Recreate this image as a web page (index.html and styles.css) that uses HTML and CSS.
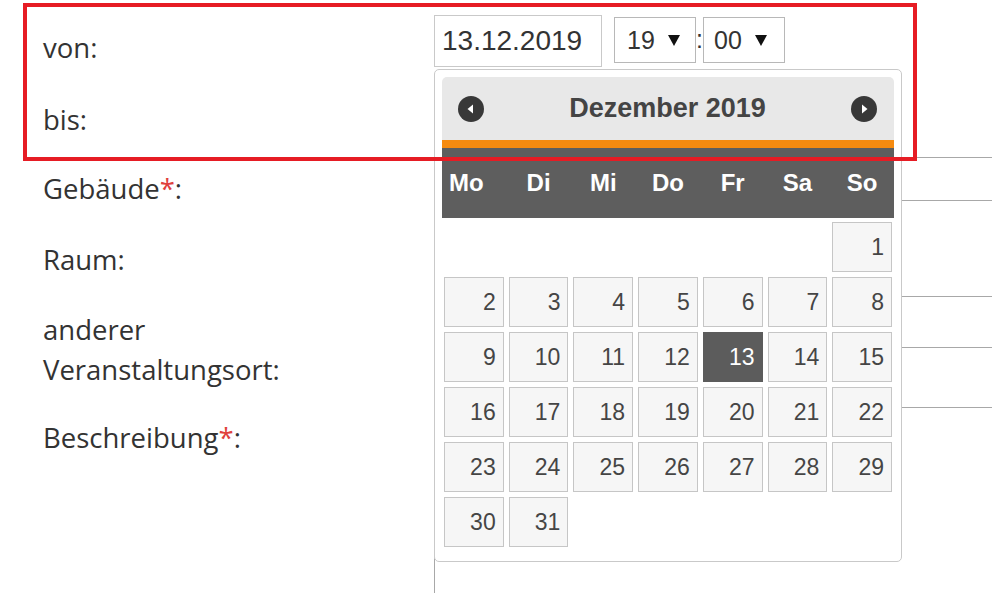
FILE: index.html
```html
<!DOCTYPE html>
<html lang="de">
<head>
<meta charset="utf-8">
<title>Veranstaltung</title>
<link rel="stylesheet" href="styles.css">
</head>
<body>
<div class="page">
  <div class="form">
    <div class="row row-von">
      <div class="lbl">von:</div>
      <div class="fld fld-von">
        <div class="date-input">13.12.2019</div>
        <div class="sel sel-h"><span class="sel-val">19</span><span class="caret"></span></div>
        <span class="colon">:</span>
        <div class="sel sel-m"><span class="sel-val">00</span><span class="caret"></span></div>
      </div>
    </div>
    <div class="row row-bis">
      <div class="lbl">bis:</div>
      <div class="fld"></div>
    </div>
    <div class="row row-geb">
      <div class="lbl">Gebäude<span class="req">*</span>:</div>
      <div class="fld"><div class="box box-geb"></div></div>
    </div>
    <div class="row row-raum">
      <div class="lbl">Raum:</div>
      <div class="fld"></div>
    </div>
    <div class="row row-ort">
      <div class="lbl">anderer<br>Veranstaltungsort:</div>
      <div class="fld"><div class="box box-ort"></div></div>
    </div>
    <div class="row row-besch">
      <div class="lbl">Beschreibung<span class="req">*</span>:</div>
      <div class="fld"><div class="box box-text"></div></div>
    </div>
  </div>

  <div class="dp">
    <div class="dp-head">
      <svg class="dp-nav" width="26" height="26" viewBox="0 0 26 26"><circle cx="13" cy="13" r="13" fill="#383838"/><polygon points="15,8.5 15,17.5 9.5,13" fill="#fff"/></svg>
      <span class="dp-title">Dezember 2019</span>
      <svg class="dp-nav" width="26" height="26" viewBox="0 0 26 26"><circle cx="13" cy="13" r="13" fill="#383838"/><polygon points="11,8.5 11,17.5 16.5,13" fill="#fff"/></svg>
    </div>
    <div class="dp-days">
      <span class="mo">Mo</span><span>Di</span><span>Mi</span><span>Do</span><span>Fr</span><span>Sa</span><span>So</span>
    </div>
    <div class="dp-grid">
      <span class="d first">1</span>
      <span class="d">2</span><span class="d">3</span><span class="d">4</span><span class="d">5</span><span class="d">6</span><span class="d">7</span><span class="d">8</span>
      <span class="d">9</span><span class="d">10</span><span class="d">11</span><span class="d">12</span><span class="d active">13</span><span class="d">14</span><span class="d">15</span>
      <span class="d">16</span><span class="d">17</span><span class="d">18</span><span class="d">19</span><span class="d">20</span><span class="d">21</span><span class="d">22</span>
      <span class="d">23</span><span class="d">24</span><span class="d">25</span><span class="d">26</span><span class="d">27</span><span class="d">28</span><span class="d">29</span>
      <span class="d">30</span><span class="d">31</span>
    </div>
  </div>

  <div class="highlight"></div>
</div>
</body>
</html>
```

FILE: styles.css
```css
html, body {
  margin: 0;
  padding: 0;
  background: #fff;
}
.page {
  position: relative;
  width: 992px;
  height: 593px;
  overflow: hidden;
  font-family: "Open Sans", "Noto Sans", sans-serif;
  color: #333;
}
.form {
  display: flex;
  flex-direction: column;
}
.row {
  display: flex;
}
.lbl {
  width: 434px;
  flex: none;
  box-sizing: border-box;
  padding-left: 43px;
  font-size: 27.5px;
  line-height: 40px;
}
.fld {
  flex: 1;
  min-width: 0;
}
.req {
  color: #e0403c;
}
.row-von { height: 84px; }
.row-von .lbl { padding-top: 28px; }
.row-bis { height: 72px; }
.row-bis .lbl { padding-top: 16px; }
.row-geb { height: 70px; }
.row-geb .lbl { padding-top: 13px; }
.row-raum { height: 70px; }
.row-raum .lbl { padding-top: 14px; }
.row-ort { height: 104px; }
.row-ort .lbl { padding-top: 14px; }
.row-besch { height: 240px; }
.row-besch .lbl { padding-top: 18px; }

.fld-von {
  display: flex;
  align-items: flex-start;
  padding-top: 15px;
  font-family: "Liberation Sans", Arial, sans-serif;
  color: #333;
}
.date-input {
  box-sizing: border-box;
  width: 168px;
  height: 52px;
  border: 1px solid #c9c9c9;
  padding-left: 7px;
  font-size: 28px;
  line-height: 50px;
  margin-right: 12px;
}
.sel {
  box-sizing: border-box;
  width: 82px;
  height: 46px;
  margin-top: 2px;
  border: 1px solid #b8b8b8;
  display: flex;
  align-items: center;
  padding-left: 12px;
  font-size: 25px;
}
.sel-m { padding-left: 10px; }
.sel-val {
  width: 41px;
}
.caret {
  width: 0;
  height: 0;
  border-left: 6px solid transparent;
  border-right: 6px solid transparent;
  border-top: 11px solid #111;
}
.colon {
  width: 7px;
  font-size: 25px;
  line-height: 46px;
  margin-top: 1px;
  text-align: center;
}
.box {
  box-sizing: border-box;
  border: 1px solid #a8a8a8;
  border-right: none;
}
.box-geb {
  margin-top: 1px;
  height: 44px;
}
.box-ort {
  height: 52px;
}
.box-text {
  margin-top: 7px;
  height: 260px;
}

/* datepicker popup */
.dp {
  position: absolute;
  left: 434px;
  top: 69px;
  width: 468px;
  box-sizing: border-box;
  border: 1px solid #c9c9c9;
  border-radius: 5px;
  background: #fff;
  padding: 7px 7px 14px;
  font-family: "Liberation Sans", Arial, sans-serif;
}
.dp-head {
  height: 63px;
  background: #e8e8e8;
  border-radius: 5px 5px 0 0;
  border-bottom: 8px solid #f68b0f;
  display: flex;
  align-items: center;
  justify-content: space-between;
  padding: 0 17px 0 16px;
}
.dp-nav {
  display: block;
}
.dp-title {
  font-weight: bold;
  font-size: 27px;
  color: #444;
}
.dp-days {
  height: 70px;
  background: #5e5e5e;
  display: grid;
  grid-template-columns: repeat(7, 1fr);
  column-gap: 5px;
  padding: 0 2px;
  align-items: center;
  color: #fff;
  font-weight: bold;
  font-size: 24px;
  text-align: center;
}
.dp-days .mo {
  padding-right: 15px;
}
.dp-grid {
  margin-top: 4px;
  display: grid;
  grid-template-columns: repeat(7, 1fr);
  grid-auto-rows: 50px;
  gap: 5px;
  padding: 0 2px;
}
.d {
  box-sizing: border-box;
  border: 1px solid #c6c6c6;
  background: #f6f6f6;
  color: #454545;
  font-size: 23px;
  line-height: 48px;
  text-align: right;
  padding-right: 7px;
}
.d.first {
  grid-column-start: 7;
}
.d.active {
  background: #5c5c5c;
  border-color: #5c5c5c;
  color: #fff;
}

.highlight {
  position: absolute;
  left: 23px;
  top: 3px;
  width: 894px;
  height: 158px;
  box-sizing: border-box;
  border: 4px solid #e61c24;
}
```
